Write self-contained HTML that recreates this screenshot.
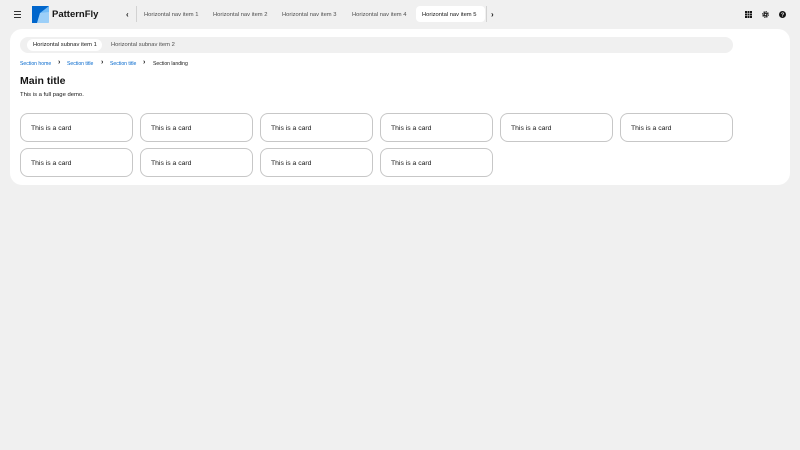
<!DOCTYPE html><html><head><style>
*{box-sizing:border-box;margin:0;padding:0}
body{width:800px;height:450px;background:#f0f0f0;font-family:"Liberation Sans",sans-serif;color:#151515;position:relative;overflow:hidden}
.a{position:absolute}
.nav{font-size:5.8px;color:#4d4d4d;top:11.5px}
.card{position:absolute;width:113px;height:29px;border:1px solid #c7c7c7;border-radius:8px;background:#fff;font-size:6.8px;padding:1px 0 0 10px;line-height:27px}
</style></head><body>
<div class="a" style="left:14px;top:11px;width:7px">
<div style="height:1px;background:#333;margin-bottom:2px"></div><div style="height:1px;background:#333;margin-bottom:2px"></div><div style="height:1px;background:#333"></div></div>
<svg class="a" style="left:32px;top:6px" width="17" height="17" viewBox="0 0 17 17"><rect width="17" height="17" rx="1" fill="#73bcf7"/><path d="M0 0H17L8 7 5 17H0Z" fill="#0066cc"/><path d="M8 7 5 17 17 17 17 6Z" fill="#b8dcf8" opacity=".6"/></svg>
<div class="a" style="left:52px;top:9px;font-size:9.5px;font-weight:bold">PatternFly</div>
<div class="a" style="left:126px;top:10px;font-size:8px;font-weight:bold">‹</div>
<div class="a" style="left:136px;top:6px;width:1px;height:16px;background:#d2d2d2"></div>
<div class="a nav" style="left:144px">Horizontal nav item 1</div>
<div class="a nav" style="left:213px">Horizontal nav item 2</div>
<div class="a nav" style="left:282px">Horizontal nav item 3</div>
<div class="a nav" style="left:352px">Horizontal nav item 4</div>
<div class="a" style="left:416px;top:6px;width:69px;height:16px;background:#fff;border-radius:4px"></div>
<div class="a nav" style="left:422px;color:#151515">Horizontal nav item 5</div>
<div class="a" style="left:486px;top:6px;width:1px;height:16px;background:#d2d2d2"></div>
<div class="a" style="left:491px;top:10px;font-size:8px;font-weight:bold">›</div>
<svg class="a" style="left:745px;top:11px" width="7" height="7"><g fill="#151515"><rect x="0" y="0" width="2" height="2"/><rect x="2.5" y="0" width="2" height="2"/><rect x="5" y="0" width="2" height="2"/><rect x="0" y="2.5" width="2" height="2"/><rect x="2.5" y="2.5" width="2" height="2"/><rect x="5" y="2.5" width="2" height="2"/><rect x="0" y="5" width="2" height="2"/><rect x="2.5" y="5" width="2" height="2"/><rect x="5" y="5" width="2" height="2"/></g></svg>
<svg class="a" style="left:762px;top:11px" width="7" height="7" viewBox="0 0 7 7"><circle cx="3.5" cy="3.5" r="2.6" fill="none" stroke="#151515" stroke-width="1.6" stroke-dasharray="1.2 .8"/><circle cx="3.5" cy="3.5" r="1.8" fill="#151515"/><circle cx="3.5" cy="3.5" r=".8" fill="#f0f0f0"/></svg>
<svg class="a" style="left:779px;top:11px" width="7" height="7" viewBox="0 0 7 7"><circle cx="3.5" cy="3.5" r="3.5" fill="#151515"/><text x="3.5" y="5.6" font-size="5.5" font-weight="bold" fill="#f0f0f0" text-anchor="middle" font-family="Liberation Sans">?</text></svg>
<div class="a" style="left:10px;top:29px;width:780px;height:156px;background:#fff;border-radius:12px"></div>
<div class="a" style="left:20px;top:37px;width:713px;height:16px;background:#f0f0f0;border-radius:8px"></div>
<div class="a" style="left:27px;top:39px;width:75px;height:12px;background:#fff;border-radius:6px"></div>
<div class="a" style="left:33px;top:41.5px;font-size:5.8px">Horizontal subnav item 1</div>
<div class="a" style="left:111px;top:41.5px;font-size:5.8px;color:#4d4d4d">Horizontal subnav item 2</div>
<div class="a" style="left:20px;top:61px;font-size:5.1px;color:#0066cc">Section home</div>
<div class="a" style="left:58px;top:59px;font-size:7px;font-weight:bold">›</div>
<div class="a" style="left:67px;top:61px;font-size:5.1px;color:#0066cc">Section title</div>
<div class="a" style="left:101px;top:59px;font-size:7px;font-weight:bold">›</div>
<div class="a" style="left:110px;top:61px;font-size:5.1px;color:#0066cc">Section title</div>
<div class="a" style="left:143px;top:59px;font-size:7px;font-weight:bold">›</div>
<div class="a" style="left:153px;top:61px;font-size:5.1px">Section landing</div>
<div class="a" style="left:20px;top:75px;font-size:10.5px;font-weight:bold">Main title</div>
<div class="a" style="left:20px;top:92px;font-size:5.9px">This is a full page demo.</div>
<div class="card" style="left:20px;top:113px">This is a card</div>
<div class="card" style="left:140px;top:113px">This is a card</div>
<div class="card" style="left:260px;top:113px">This is a card</div>
<div class="card" style="left:380px;top:113px">This is a card</div>
<div class="card" style="left:500px;top:113px">This is a card</div>
<div class="card" style="left:620px;top:113px">This is a card</div>
<div class="card" style="left:20px;top:148px">This is a card</div>
<div class="card" style="left:140px;top:148px">This is a card</div>
<div class="card" style="left:260px;top:148px">This is a card</div>
<div class="card" style="left:380px;top:148px">This is a card</div>
</body></html>
